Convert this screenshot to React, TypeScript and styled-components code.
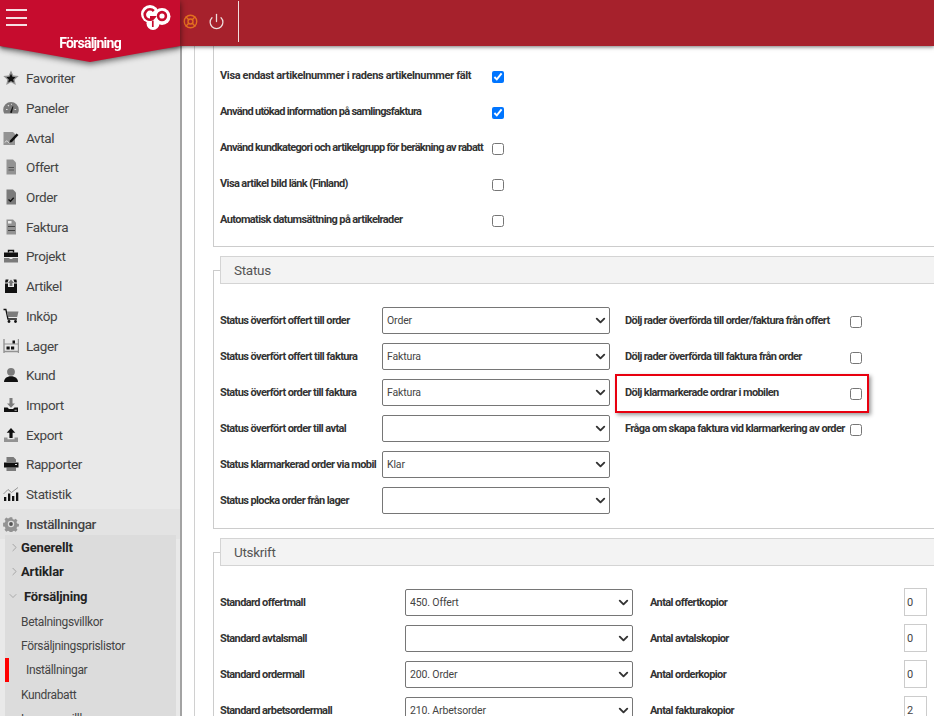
import React from "react";
import styled, { createGlobalStyle } from "styled-components";
import { ChevronDown, ChevronRight, LifeBuoy, Power } from "lucide-react";

const Global = createGlobalStyle`
  html, body { margin: 0; padding: 0; height: 716px; overflow: hidden; background: #fff; }
  body { font-family: Roboto, "Liberation Sans", sans-serif; color: #333; }
  * { box-sizing: border-box; }
`;

const Page = styled.div`
  width: 934px;
  height: 716px;
  display: flex;
  flex-direction: column;
  overflow: hidden;
`;

const Header = styled.header`
  height: 46px;
  flex: none;
  display: flex;
  align-items: flex-start;
  background: #a6212c;
  box-shadow: 0 1px 4px rgba(0, 0, 0, 0.55);
  position: relative;
  z-index: 3;
`;

const BrandShadow = styled.div`
  width: 180px;
  flex: none;
  filter: drop-shadow(0 2px 3px rgba(0, 0, 0, 0.6));
`;

const Brand = styled.div`
  height: 62px;
  background: #c60c2e;
  clip-path: polygon(0 0, 100% 0, 100% 46px, 50% 100%, 0 46px);
  display: flex;
  flex-direction: column;
`;

const BrandTop = styled.div`
  height: 35px;
  display: flex;
  justify-content: space-between;
  padding: 9px 9px 0 6px;
`;

const Hamburger = styled.div`
  width: 21px;
  height: 17px;
  display: flex;
  flex-direction: column;
  justify-content: space-between;
  span {
    height: 2px;
    background: #f6dfe3;
  }
`;

const BrandLabel = styled.div`
  text-align: center;
  color: #fff;
  font-size: 14px;
  line-height: 16px;
  font-weight: 700;
  letter-spacing: -0.75px;
`;

const Tools = styled.div`
  display: flex;
  align-items: center;
  height: 42px;
  padding-top: 0;
`;

const Divider = styled.div`
  width: 1px;
  height: 41px;
  margin: 1px 0 0 6px;
  background: #f2dede;
`;

const ToolSlot = styled.div<{ $w: number }>`
  width: ${(p) => p.$w}px;
  display: flex;
  justify-content: center;
`;

const Body = styled.div`
  flex: 1;
  min-height: 0;
  display: flex;
`;

const Sidebar = styled.nav`
  width: 182px;
  flex: none;
  background: #e9e9e9;
  border-right: 2px solid #a3a3a3;
  padding-top: 17.5px;
  overflow: hidden;
`;

const NavItem = styled.div<{ $active?: boolean }>`
  height: 29.7px;
  display: flex;
  align-items: center;
  padding-left: 3px;
  gap: 7px;
  font-size: 13.5px;
  letter-spacing: -0.4px;
  color: #444;
  font-weight: ${(p) => (p.$active ? 500 : 400)};
  background: ${(p) => (p.$active ? "#e3e3e3" : "transparent")};
  svg { flex: none; }
`;

const SubMenu = styled.div`
  margin: -3.5px 4px 0 5px;
  background: #dcdcdc;
  height: 200px;
`;

const SubHead = styled.div<{ $open?: boolean }>`
  height: 24.5px;
  display: flex;
  align-items: center;
  padding-left: 0;
  margin-bottom: ${(p) => (p.$open ? "1px" : "0")};
  gap: ${(p) => (p.$open ? "5px" : "0")};
  font-size: 13px;
  font-weight: 700;
  color: #222;
  letter-spacing: -0.15px;
  svg { flex: none; color: #888; margin-left: ${(p) => (p.$open ? "2px" : "3px")}; }
`;

const SubItem = styled.div<{ $current?: boolean }>`
  height: 24.3px;
  display: flex;
  align-items: center;
  font-size: 12px;
  letter-spacing: -0.35px;
  color: #444;
  padding-left: ${(p) => (p.$current ? "17px" : "16px")};
  border-left: ${(p) => (p.$current ? "4px solid #f00" : "0")};
`;

const Main = styled.main`
  flex: 1;
  min-width: 0;
  overflow: hidden;
  padding-left: 12px;
`;

const Track = styled.div`
  height: 100%;
  border-left: 1px solid #d0d0d0;
  padding-left: 18px;
  width: 800px;
`;

const TopPanel = styled.section`
  border-left: 1px solid #ccc;
  border-bottom: 1px solid #ccc;
  padding: 11px 0 9px 6px;
`;

const CheckRow = styled.div`
  height: 36px;
  display: grid;
  grid-template-columns: 272px 13px;
  align-items: center;
`;

const Label = styled.label<{ $spacing?: number }>`
  font-size: 11px;
  font-weight: 700;
  color: #333;
  white-space: nowrap;
  letter-spacing: ${(p) => p.$spacing ?? -0.6}px;
`;

const Check = styled.input.attrs({ type: "checkbox" })`
  width: 12px;
  height: 12px;
  margin: 4px 0 0;
  accent-color: #0075ff;
`;

const Fieldset = styled.fieldset`
  margin: 9px 0 0;
  padding: 18px 0 10px 6px;
  border: 1px solid #ccc;
  border-right: 0;
  min-width: 0;
`;

const Legend = styled.legend`
  display: block;
  width: 100%;
  height: 28px;
  padding: 0 0 0 13px;
  margin: 0;
  border: 1px solid #d4d4d4;
  background: #f3f3f3;
  font-size: 13.5px;
  letter-spacing: -0.3px;
  line-height: 26px;
  color: #555;
`;

const StatusRow = styled.div`
  position: relative;
  height: 36px;
  display: grid;
  grid-template-columns: 162px 243px 225px 13px;
  align-items: center;
`;

const PrintRow = styled.div`
  height: 36px;
  display: grid;
  grid-template-columns: 185px 245px 254px 23px;
  align-items: center;
`;

const SelectWrap = styled.div`
  position: relative;
  width: 228px;
  height: 27px;
  svg {
    position: absolute;
    right: 2px;
    top: 6px;
    color: #333;
    pointer-events: none;
  }
`;

const Select = styled.select`
  appearance: none;
  display: block;
  width: 100%;
  height: 100%;
  border: 1px solid #767676;
  border-radius: 2px;
  background: #fff;
  padding: 0 20px 0 4px;
  font: 400 10.5px Roboto, sans-serif;
  letter-spacing: -0.15px;
  color: #444;
`;

const NumberInput = styled.input`
  width: 23px;
  height: 28px;
  border: 1px solid #ccc;
  padding: 0 0 0 2px;
  font: 400 11px Roboto, sans-serif;
  color: #444;
`;

const Highlight = styled.div`
  position: absolute;
  left: 395px;
  top: 0;
  width: 254px;
  height: 39px;
  border: 2px solid #e8000f;
  box-shadow: 2px 2px 4px rgba(0, 0, 0, 0.4);
  pointer-events: none;
`;

const LogoMark = styled.svg`
  margin-top: -4px;
`;

const Logo = () => (
  <LogoMark width="31" height="25" viewBox="0 0 31 25">
    <g fill="#fff">
      <circle cx="10" cy="9" r="9" />
      <circle cx="22" cy="11.5" r="8.5" />
      <circle cx="13" cy="18.5" r="6.5" />
    </g>
    <g fill="none" stroke="#c60c2e">
      <path strokeWidth="2.6" d="M13.8 6A5.2 5.2 0 1 0 14.4 12.2H10" />
      <circle strokeWidth="2.6" cx="22" cy="11" r="3.9" />
      <path strokeWidth="1.7" d="M12.8 15.5V22" />
    </g>
  </LogoMark>
);

const G = "#7b7b7b";
const L = "#939393";
const K = "#111";

const icons: Record<string, React.ReactNode> = {
  star: (
    <>
      <path fill={L} d="M8 0.5l2.3 5 5.4.6-4 3.6 1.1 5.3L8 12.3l-4.8 2.7 1.1-5.3-4-3.6 5.4-.6z" />
      <path fill={K} d="M8 3.8l1.4 3 3.2.4-2.4 2.2.7 3.2L8 11l-2.9 1.6.7-3.2-2.4-2.2 3.2-.4z" />
    </>
  ),
  gauge: (
    <>
      <path fill={G} d="M8 2a7.8 7.8 0 0 0-7.8 7.8c0 1.5.4 2.6 1 3.7h13.6c.6-1.1 1-2.2 1-3.7A7.8 7.8 0 0 0 8 2z" />
      <path fill="#ddd" d="M3 9h1.6v1H3zM11.5 9h1.6v1h-1.6zM4.5 5.5l1-.7.8 1-1 .7zM8 3.7h.8v1.4H8z" />
      <path fill={K} d="M7 12.6l2.6-6.4.8.3-1.6 6.6z" />
    </>
  ),
  avtal: (
    <>
      <path fill={L} d="M0.5 2h9.5l2 2v11H0.5z" />
      <path fill="none" stroke="#e4e4e4" strokeWidth="1" d="M2 12.5c1-2 2-2 3-.6s2 1 3 0" />
      <path fill={K} d="M7 10.5l6.5-7 2 1.6-6.5 7-2.6.9z" />
    </>
  ),
  offert: (
    <>
      <path fill={L} d="M3.5 0.5h6.5l3 3V15.5H3.5z" />
      <path fill="#555" d="M5.5 8h5.5v1H5.5zM5.5 10.5h5.5v1H5.5z" />
    </>
  ),
  order: (
    <>
      <path fill={G} d="M3.5 0.5h6.5l3 3V15.5H3.5z" />
      <path fill="none" stroke={K} strokeWidth="1.4" d="M5.5 10.5l2 1.7 3.2-3.4" />
    </>
  ),
  faktura: (
    <>
      <path fill={L} d="M3.5 0.5h6.5l3 3V15.5H3.5z" />
      <path fill="#eee" d="M5 2h3.5v2.5H5z" />
      <path fill="#444" d="M5 7h7v1.1H5zM5 11h7v1.1H5z" />
    </>
  ),
  projekt: (
    <>
      <path fill="none" stroke={K} strokeWidth="1.4" d="M5.5 4.5V2.5h5v2" />
      <path fill={K} d="M1 4.5h14V9H1z" />
      <path fill={G} d="M1 10h5.5v1h3v-1H15v4.5H1z" />
    </>
  ),
  artikel: (
    <>
      <path fill={K} d="M2 5.5h3V9h6V5.5h3v9.5H2z" />
      <path fill={K} d="M2.6 1.5h3L4.5 4.5H2zM10.4 1.5h3l.6 3h-2.5z" />
      <path fill="#777" d="M8 1.5L11 5H9.4v3H6.6V5H5z" />
    </>
  ),
  inkop: (
    <>
      <path fill="none" stroke={K} strokeWidth="1.3" d="M0.5 1.5h2.4l2 9.5h9" />
      <path fill={G} d="M4 3.5h11.5l-1.3 5.5H5z" />
      <circle cx="6" cy="13.5" r="1.4" fill={K} />
      <circle cx="12.5" cy="13.5" r="1.4" fill={K} />
    </>
  ),
  lager: (
    <>
      <path fill="none" stroke={L} strokeWidth="1.4" d="M1 1v14M15.5 1v14M1 13.5h14.5" />
      <path fill="none" stroke={L} strokeWidth="1" d="M1 6h14.5" />
      <path fill={K} d="M3.5 8.5h3.2v3H3.5zM8 8.5h3.2v3H8zM9.5 2.5h2.5v3H9.5z" />
    </>
  ),
  kund: (
    <>
      <circle cx="8" cy="4.8" r="3.9" fill={G} />
      <path fill={K} d="M1 15c0-3.6 2.8-5.8 7-5.8s7 2.2 7 5.8z" />
    </>
  ),
  import: (
    <>
      <path fill={G} d="M6.5 1h3v5.5H12L8 10.8 4 6.5h2.5z" />
      <path fill={K} d="M1 10.5h3.5L6 12h4l1.5-1.5H15V15H1z" />
      <path fill="#ddd" d="M11.5 12.8h2.3v.8h-2.3z" />
    </>
  ),
  export: (
    <>
      <path fill={K} d="M8 1l4.3 4.8H9.6V11H6.4V5.8H3.7z" />
      <path fill={L} d="M1 10.5h3.5v1.8h7v-1.8H15V15H1z" />
    </>
  ),
  rapporter: (
    <>
      <path fill={G} d="M3.5 1h7L13 3.5V6H3.5zM3.5 11.5h9.5V15H3.5z" />
      <path fill={K} d="M1 6.5h14.5V11.5H1z" />
      <path fill="#ddd" d="M12 8h2v1h-2z" />
    </>
  ),
  statistik: (
    <>
      <path fill="none" stroke={L} strokeWidth="1" d="M0.5 8L5 3.5l3.5 3 6.5-5" />
      <path fill={K} d="M1 11h2.3v4H1zM5 7.5h2.3V15H5zM9 10h2.3v5H9zM13 6.5h2.3V15H13z" />
    </>
  ),
  gear: (
    <>
      <path fill={L} d="M6.6 0.5h2.8l.4 2 1.6.7 1.8-1.1 2 2-1.1 1.8.7 1.6 2 .4v2.8l-2 .4-.7 1.6 1.1 1.8-2 2-1.8-1.1-1.6.7-.4 2H6.6l-.4-2-1.6-.7-1.8 1.1-2-2 1.1-1.8-.7-1.6-2-.4V6.6l2-.4.7-1.6L.8 2.8l2-2 1.8 1.1 1.6-.7z" transform="translate(0.8 0.8) scale(0.9)" />
      <circle cx="8" cy="8" r="3.2" fill="#ddd" />
      <circle cx="8" cy="8" r="1.9" fill="#555" />
    </>
  ),
};

const NavIcon = ({ name }: { name: string }) => (
  <svg width="16" height="16" viewBox="0 0 16 16">
    {icons[name]}
  </svg>
);

const nav: [string, string][] = [
  ["star", "Favoriter"],
  ["gauge", "Paneler"],
  ["avtal", "Avtal"],
  ["offert", "Offert"],
  ["order", "Order"],
  ["faktura", "Faktura"],
  ["projekt", "Projekt"],
  ["artikel", "Artikel"],
  ["inkop", "Inköp"],
  ["lager", "Lager"],
  ["kund", "Kund"],
  ["import", "Import"],
  ["export", "Export"],
  ["rapporter", "Rapporter"],
  ["statistik", "Statistik"],
];

const topChecks: { text: string; on: boolean; spacing?: number }[] = [
  { text: "Visa endast artikelnummer i radens artikelnummer fält", on: true, spacing: -0.36 },
  { text: "Använd utökad information på samlingsfaktura", on: true, spacing: -0.7 },
  { text: "Använd kundkategori och artikelgrupp för beräkning av rabatt", on: false, spacing: -0.68 },
  { text: "Visa artikel bild länk (Finland)", on: false },
  { text: "Automatisk datumsättning på artikelrader", on: false },
];

const statusRows: { label: string; value: string; side?: string; mark?: boolean }[] = [
  { label: "Status överfört offert till order", value: "Order", side: "Dölj rader överförda till order/faktura från offert" },
  { label: "Status överfört offert till faktura", value: "Faktura", side: "Dölj rader överförda till faktura från order" },
  { label: "Status överfört order till faktura", value: "Faktura", side: "Dölj klarmarkerade ordrar i mobilen", mark: true },
  { label: "Status överfört order till avtal", value: "", side: "Fråga om skapa faktura vid klarmarkering av order" },
  { label: "Status klarmarkerad order via mobil", value: "Klar" },
  { label: "Status plocka order från lager", value: "" },
];

const printRows: [string, string, string, string][] = [
  ["Standard offertmall", "450. Offert", "Antal offertkopior", "0"],
  ["Standard avtalsmall", "", "Antal avtalskopior", "0"],
  ["Standard ordermall", "200. Order", "Antal orderkopior", "0"],
  ["Standard arbetsordermall", "210. Arbetsorder", "Antal fakturakopior", "2"],
];

const Dropdown = ({ value }: { value: string }) => (
  <SelectWrap>
    <Select defaultValue={value}>
      <option value={value}>{value}</option>
    </Select>
    <ChevronDown size={15} strokeWidth={3} />
  </SelectWrap>
);

export default function App() {
  return (
    <Page>
      <Global />
      <Header>
        <BrandShadow>
          <Brand>
            <BrandTop>
              <Hamburger>
                <span />
                <span />
                <span />
              </Hamburger>
              <Logo />
            </BrandTop>
            <BrandLabel>Försäljning</BrandLabel>
          </Brand>
        </BrandShadow>
        <Tools>
          <ToolSlot $w={21}>
            <LifeBuoy size={15} color="#e2701f" strokeWidth={2.2} />
          </ToolSlot>
          <ToolSlot $w={31}>
            <Power size={17} color="#ecdcdc" strokeWidth={1.8} />
          </ToolSlot>
          <Divider />
        </Tools>
      </Header>
      <Body>
        <Sidebar>
          {nav.map(([icon, text]) => (
            <NavItem key={text}>
              <NavIcon name={icon} />
              {text}
            </NavItem>
          ))}
          <NavItem $active>
            <NavIcon name="gear" />
            Inställningar
          </NavItem>
          <SubMenu>
            <SubHead>
              <ChevronRight size={13} strokeWidth={1.2} />
              Generellt
            </SubHead>
            <SubHead>
              <ChevronRight size={13} strokeWidth={1.2} />
              Artiklar
            </SubHead>
            <SubHead $open>
              <ChevronDown size={12} strokeWidth={1.2} />
              Försäljning
            </SubHead>
            <SubItem>Betalningsvillkor</SubItem>
            <SubItem>Försäljningsprislistor</SubItem>
            <SubItem $current>Inställningar</SubItem>
            <SubItem>Kundrabatt</SubItem>
            <SubItem>Leveransvillkor</SubItem>
          </SubMenu>
        </Sidebar>
        <Main>
          <Track>
            <TopPanel>
              {topChecks.map((c) => (
                <CheckRow key={c.text}>
                  <Label $spacing={c.spacing}>{c.text}</Label>
                  <Check defaultChecked={c.on} />
                </CheckRow>
              ))}
            </TopPanel>
            <Fieldset>
              <Legend>Status</Legend>
              {statusRows.map((r) => (
                <StatusRow key={r.label}>
                  <Label>{r.label}</Label>
                  <Dropdown value={r.value} />
                  {r.side && <Label>{r.side}</Label>}
                  {r.side && <Check />}
                  {r.mark && <Highlight />}
                </StatusRow>
              ))}
            </Fieldset>
            <Fieldset>
              <Legend>Utskrift</Legend>
              {printRows.map(([a, b, c, d]) => (
                <PrintRow key={a}>
                  <Label>{a}</Label>
                  <Dropdown value={b} />
                  <Label>{c}</Label>
                  <NumberInput defaultValue={d} />
                </PrintRow>
              ))}
            </Fieldset>
          </Track>
        </Main>
      </Body>
    </Page>
  );
}
